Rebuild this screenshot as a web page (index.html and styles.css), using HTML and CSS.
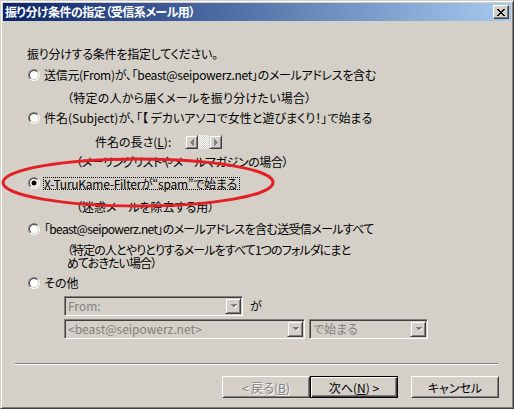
FILE: index.html
```html
<!DOCTYPE html>
<html lang="ja">
<head>
<meta charset="utf-8">
<title>振り分け条件の指定</title>
<link rel="stylesheet" href="styles.css">
</head>
<body>
<div class="window">
  <div class="titlebar">
    <span class="title">振り分け条件の指定（受信系メール用）</span>
    <span class="close-btn">
      <svg width="8" height="7" viewBox="0 0 8 7" shape-rendering="crispEdges">
        <rect x="0" y="0" width="2" height="1"/><rect x="6" y="0" width="2" height="1"/>
        <rect x="1" y="1" width="2" height="1"/><rect x="5" y="1" width="2" height="1"/>
        <rect x="2" y="2" width="4" height="1"/>
        <rect x="3" y="3" width="2" height="1"/>
        <rect x="2" y="4" width="4" height="1"/>
        <rect x="1" y="5" width="2" height="1"/><rect x="5" y="5" width="2" height="1"/>
        <rect x="0" y="6" width="2" height="1"/><rect x="6" y="6" width="2" height="1"/>
      </svg>
    </span>
  </div>

  <div class="content">
    <div class="line intro">振り分けする条件を指定してください。</div>

    <div class="line opt opt-from"><span class="radio"></span><span class="t-from">送信元(From)が、「beast@seipowerz.net」のメールアドレスを含む</span></div>
    <div class="line note note-a note-from">（特定の人から届くメールを振り分けたい場合）</div>

    <div class="line opt opt-subject"><span class="radio"></span><span>件名(Subject)が、「【 デカいアソコで女性と遊びまくり！」で始まる</span></div>
    <div class="line len-row">
      <span class="len-label">件名の長さ(<u>L</u>):</span>
      <span class="spin">
        <span class="spin-btn">
          <svg width="4" height="7" viewBox="0 0 4 7" shape-rendering="crispEdges"><path d="M4 0V7L0 3.5Z" fill="#808080"/></svg>
        </span>
        <span class="spin-track"></span>
        <span class="spin-btn">
          <svg width="4" height="7" viewBox="0 0 4 7" shape-rendering="crispEdges"><path d="M0 0V7L4 3.5Z" fill="#808080"/></svg>
        </span>
      </span>
    </div>
    <div class="line note note-b note-ml">（メーリングリストやメールマガジンの場合）</div>

    <div class="line opt opt-filter"><span class="radio checked"></span><span class="focus">X-TuruKame-Filterが“spam”で始まる</span></div>
    <div class="line note note-b note-spam">（迷惑メールを除去する用）</div>

    <div class="line opt opt-all"><span class="radio"></span><span class="t-all">「beast@seipowerz.net」のメールアドレスを含む送受信メールすべて</span></div>
    <div class="note2 note-a">
      <div class="note2-line">（特定の人とやりとりするメールをすべて1つのフォルダにまと</div>
      <div class="note2-line">めておきたい場合）</div>
    </div>

    <div class="line opt opt-other"><span class="radio"></span><span>その他</span></div>

    <div class="combo-row row1">
      <span class="combo combo-from"><span class="combo-text">From:</span><span class="combo-btn"><svg width="7" height="5" viewBox="0 0 7 5" shape-rendering="crispEdges"><path d="M1 1H8L4.5 4.5Z" fill="#fff"/><path d="M0 0H7L3.5 3.5Z" fill="#808080"/></svg></span></span>
      <span class="ga">が</span>
    </div>
    <div class="combo-row row2">
      <span class="combo combo-addr"><span class="combo-text">&lt;beast@seipowerz.net&gt;</span><span class="combo-btn"><svg width="7" height="5" viewBox="0 0 7 5" shape-rendering="crispEdges"><path d="M1 1H8L4.5 4.5Z" fill="#fff"/><path d="M0 0H7L3.5 3.5Z" fill="#808080"/></svg></span></span>
      <span class="combo combo-cond"><span class="combo-text">で始まる</span><span class="combo-btn"><svg width="7" height="5" viewBox="0 0 7 5" shape-rendering="crispEdges"><path d="M1 1H8L4.5 4.5Z" fill="#fff"/><path d="M0 0H7L3.5 3.5Z" fill="#808080"/></svg></span></span>
    </div>

    <div class="separator"></div>

    <div class="buttons">
      <span class="btn disabled">&lt; 戻る(<u>B</u>)</span>
      <span class="btn default">次へ(<u>N</u>) &gt;</span>
      <span class="btn cancel">キャンセル</span>
    </div>
  </div>

  <svg class="mark" width="514" height="409" viewBox="0 0 514 409">
    <ellipse cx="138" cy="182.5" rx="135" ry="23.5" fill="none" stroke="#e41f26" stroke-width="3"/>
  </svg>
</div>
</body>
</html>
```

FILE: styles.css
```css
* { box-sizing: border-box; }

html, body {
  margin: 0;
  padding: 0;
  background: #d4d0c8;
}

body {
  font-family: "Noto Sans CJK JP", sans-serif;
  font-size: 12px;
  color: #000;
  font-feature-settings: "palt";
}

.window {
  position: relative;
  width: 514px;
  height: 409px;
  background: #d4d0c8;
  border: 1px solid;
  border-color: #d4d0c8 #404040 #404040 #d4d0c8;
  box-shadow: inset 1px 1px #fff, inset -1px -1px #808080;
  padding: 2px;
  display: flex;
  flex-direction: column;
}

.titlebar {
  flex: none;
  height: 18px;
  display: flex;
  align-items: center;
  justify-content: space-between;
  padding: 0 2px;
  background: linear-gradient(to right, #0a246a, #a6caf0);
}

.title {
  color: #fff;
  font-weight: bold;
  line-height: 18px;
  letter-spacing: -0.5px;
  white-space: nowrap;
}

.close-btn {
  width: 16px;
  height: 14px;
  display: flex;
  align-items: center;
  justify-content: center;
  background: #d4d0c8;
  border: 1px solid;
  border-color: #fff #404040 #404040 #fff;
  box-shadow: inset -1px -1px #808080;
}

.close-btn svg { fill: #000; }

.content {
  flex: 1;
  display: flex;
  flex-direction: column;
  align-items: flex-start;
}

.line {
  height: 14px;
  line-height: 14px;
  white-space: nowrap;
}

.intro {
  margin: 26px 0 0 24px;
  letter-spacing: -0.25px;
}

.opt {
  display: flex;
  align-items: center;
  gap: 4px;
  margin-left: 25px;
}

.opt-from { margin-top: 7px; }
.opt-subject { margin-top: 6px; }
.opt-filter { margin-top: 7px; }
.opt-all { margin-top: 8px; }
.opt-other { margin-top: 7px; }

.t-from { letter-spacing: -0.3px; }
.t-all { letter-spacing: -0.65px; }

.note-a { margin-left: 64px; }
.note-b { margin-left: 73px; }
.note-from { margin-top: 9px; letter-spacing: 0.25px; }
.note-ml { margin-top: 6px; letter-spacing: -0.4px; }
.note-spam { margin-top: 10px; }

.note2 {
  margin-top: 7px;
  letter-spacing: -0.9px;
  white-space: nowrap;
}

.note2-line {
  height: 13px;
  line-height: 13px;
}

.radio {
  position: relative;
  flex: none;
  width: 12px;
  height: 12px;
  border-radius: 50%;
  border: 1px solid;
  border-color: #808080 #fff #fff #808080;
}

.radio::before {
  content: "";
  position: absolute;
  inset: 0;
  border-radius: 50%;
  border: 1px solid;
  border-color: #404040 #d4d0c8 #d4d0c8 #404040;
  background: #fff;
}

.radio.checked::after {
  content: "";
  position: absolute;
  left: 3px;
  top: 3px;
  width: 4px;
  height: 4px;
  border-radius: 50%;
  background: #000;
  box-shadow: 0 0 0 0.5px #000;
}

.focus {
  height: 13px;
  line-height: 11px;
  padding: 0 2px 0 0;
  margin-left: -1px;
  letter-spacing: -0.25px;
  border: 1px dotted #000;
}

.len-row {
  display: flex;
  align-items: center;
  margin: 10px 0 0 92px;
}

.len-label { width: 90px; }

.spin {
  display: flex;
  height: 14px;
}

.spin-btn {
  width: 13px;
  height: 14px;
  display: flex;
  align-items: center;
  justify-content: center;
  background: #d4d0c8;
  border: 1px solid;
  border-color: #d4d0c8 #404040 #404040 #d4d0c8;
  box-shadow: inset 1px 1px #fff, inset -1px -1px #808080;
}

.spin-track {
  width: 11px;
  height: 14px;
  background: repeating-conic-gradient(#fff 0 25%, #d4d0c8 0 50%) 0 0 / 2px 2px;
}

.combo-row {
  display: flex;
  align-items: center;
  margin-left: 61px;
}

.row1 { margin-top: 6px; gap: 7px; }
.row2 { margin-top: 3px; gap: 4px; }

.combo {
  height: 20px;
  display: flex;
  align-items: center;
  justify-content: space-between;
  padding: 1px;
  border: 1px solid;
  border-color: #808080 #fff #fff #808080;
  box-shadow: inset 1px 1px #404040, inset -1px -1px #d4d0c8;
  background: #d4d0c8;
}

.combo-from { width: 179px; }
.combo-addr { width: 241px; }
.combo-cond { width: 119px; }

.combo-text {
  color: #808080;
  padding-left: 2px;
  line-height: 16px;
  white-space: nowrap;
}

.combo-btn {
  width: 16px;
  height: 16px;
  display: flex;
  align-items: center;
  justify-content: center;
  background: #d4d0c8;
  border: 1px solid;
  border-color: #d4d0c8 #404040 #404040 #d4d0c8;
  box-shadow: inset 1px 1px #fff, inset -1px -1px #808080;
}

.ga { line-height: 14px; }

.separator {
  margin: 24px 0 0 12px;
  width: 483px;
  height: 2px;
  border-top: 1px solid #808080;
  border-bottom: 1px solid #fff;
}

.buttons {
  display: flex;
  margin: 11px 0 0 219px;
}

.btn {
  width: 88px;
  height: 22px;
  display: flex;
  align-items: center;
  justify-content: center;
  background: #d4d0c8;
  border: 1px solid;
  border-color: #fff #404040 #404040 #fff;
  box-shadow: inset 1px 1px #d4d0c8, inset -1px -1px #808080;
  white-space: nowrap;
}

.btn.default {
  border-color: #000;
  box-shadow: inset 1px 1px #fff, inset -1px -1px #404040, inset -2px -2px #808080;
}

.btn.cancel { margin-left: 13px; }

.btn.disabled {
  color: #808080;
  text-shadow: 1px 1px 0 #fff;
}

.mark {
  position: absolute;
  left: -1px;
  top: -1px;
  pointer-events: none;
}
```
